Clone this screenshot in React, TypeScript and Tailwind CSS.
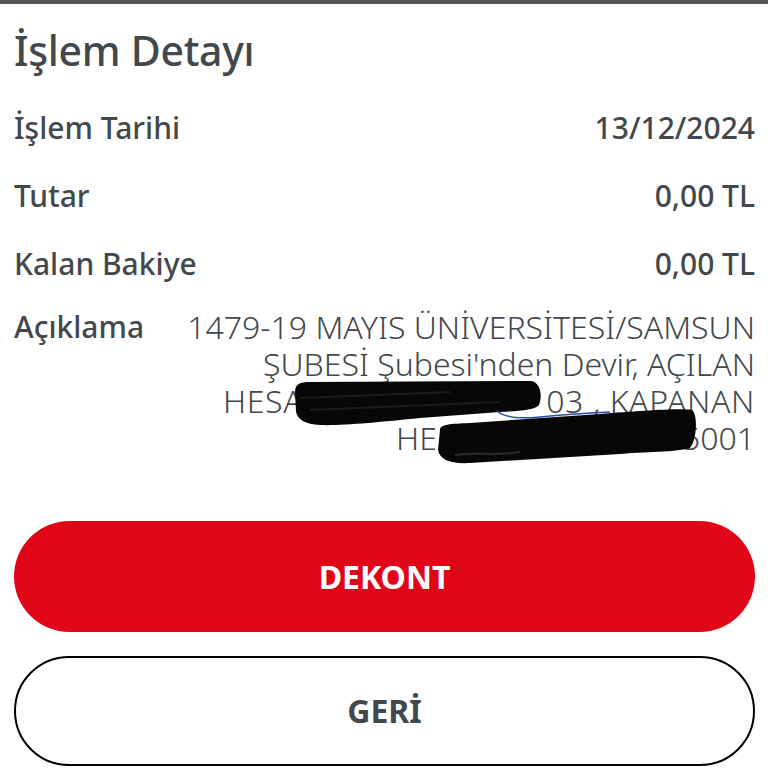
import React from "react";

export default function App() {
  const font = { fontFamily: '"Noto Sans", "Open Sans", sans-serif' };
  return (
    <div className="relative w-[768px] h-[768px] bg-white overflow-hidden text-[#43484c]" style={font}>
      <div className="h-[4px] bg-[#555555]" />
      <div className="pl-[14px] pr-[13px]">
        <h1 className="mt-[21px] text-[41px] leading-[50px] font-medium tracking-[-0.3px]">İşlem Detayı</h1>
        <div className="mt-[33px] flex justify-between items-center text-[30px] leading-[40px] font-medium">
          <span>İşlem Tarihi</span>
          <span>13/12/2024</span>
        </div>
        <div className="mt-[28px] flex justify-between items-center text-[30px] leading-[40px] font-medium">
          <span>Tutar</span>
          <span>0,00 TL</span>
        </div>
        <div className="mt-[28px] flex justify-between items-center text-[30px] leading-[40px] font-medium">
          <span>Kalan Bakiye</span>
          <span>0,00 TL</span>
        </div>
        <div className="mt-[24px] flex justify-between items-start">
          <span className="text-[30px] leading-[37px] font-medium">Açıklama</span>
          <div className="text-right text-[32px] leading-[37px] font-light">
            <div>1479-19 MAYIS ÜNİVERSİTESİ/SAMSUN</div>
            <div>ŞUBESİ Şubesi'nden Devir, AÇILAN</div>
            <div className="tracking-[0.6px]">
              HESA<span className="inline-block w-[243px]" />03 , KAPANAN
            </div>
            <div>
              HE<span className="inline-block w-[245px]" />5001
            </div>
          </div>
        </div>
        <button className="mt-[65px] w-full h-[111px] rounded-full bg-[#df0617] text-white text-[32px] font-bold flex items-center justify-center">
          DEKONT
        </button>
        <button className="mt-[24px] w-full h-[110px] rounded-full bg-white border-2 border-black text-[#43484c] text-[32px] font-bold flex items-center justify-center">
          GERİ
        </button>
      </div>
      <svg className="absolute left-0 top-0 pointer-events-none" width="768" height="768" viewBox="0 0 768 768">
        <path d="M295 392 C295 384 300 382 310 382 L530 381 C540 381 543 395 539 405 C535 410 520 411 500 412 L420 418 C380 422 340 426 320 425 C305 424 298 420 296 412 Z" fill="#070707" />
        <path d="M300 398 L450 392 M310 410 L500 402" stroke="#1c1c1c" strokeWidth="2" fill="none" />
        <path d="M497 411 C505 418 520 419 540 417 C570 414 590 413 610 412" stroke="#2a4db0" strokeWidth="1.5" fill="none" />
        <path d="M440 430 C440 424 450 424 470 423 L600 414 C640 411 680 408 692 410 C698 414 697 440 690 448 C680 452 640 452 620 454 L470 463 C450 464 440 460 438 450 Z" fill="#070707" />
        <path d="M455 455 C480 452 500 456 520 452" stroke="#2a2a2a" strokeWidth="2" fill="none" />
      </svg>
    </div>
  );
}
